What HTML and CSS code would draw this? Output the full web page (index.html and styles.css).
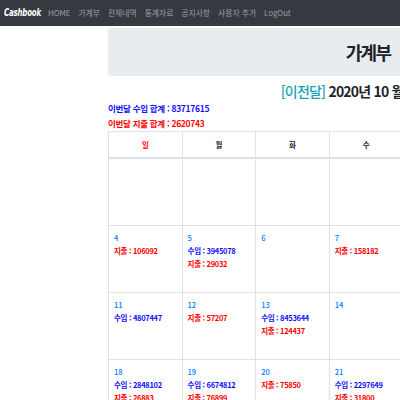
FILE: index.html
```html
<!DOCTYPE html>
<html lang="ko">
<head>
<meta charset="utf-8">
<title>Cashbook</title>
<link rel="stylesheet" href="styles.css">
</head>
<body>
<nav class="navbar">
  <span class="brand"><span class="brand-text">Cashbook</span></span>
  <ul class="nav">
    <li><a href="#">HOME</a></li>
    <li><a href="#">가계부</a></li>
    <li><a href="#">전체내역</a></li>
    <li><a href="#">통계자료</a></li>
    <li><a href="#">공지사항</a></li>
    <li><a href="#">사용자 추가</a></li>
    <li><a href="#">LogOut</a></li>
  </ul>
</nav>
<main class="container">
  <div class="jumbotron"><h1>가계부</h1></div>
  <h3 class="month"><a href="#" class="prev">[이전달]</a> 2020년 10 월 <a href="#" class="prev">[다음달]</a></h3>
  <div class="sum income">이번달 수입 합계 : 83717615</div>
  <div class="sum expense">이번달 지출 합계 : 2620743</div>
  <table class="cal">
    <thead>
      <tr><th class="sun">일</th><th>월</th><th>화</th><th>수</th><th>목</th><th>금</th><th>토</th></tr>
    </thead>
    <tbody>
      <tr><td></td><td></td><td></td><td></td><td><span class="d">1</span></td><td><span class="d">2</span></td><td><span class="d">3</span></td></tr>
      <tr>
        <td><span class="d">4</span><span class="out">지출 : 106092</span></td>
        <td><span class="d">5</span><span class="in">수입 : 3945078</span><span class="out">지출 : 29032</span></td>
        <td><span class="d">6</span></td>
        <td><span class="d">7</span><span class="out">지출 : 158182</span></td>
        <td><span class="d">8</span></td><td><span class="d">9</span></td><td><span class="d">10</span></td>
      </tr>
      <tr>
        <td><span class="d">11</span><span class="in">수입 : 4807447</span></td>
        <td><span class="d">12</span><span class="out">지출 : 57207</span></td>
        <td><span class="d">13</span><span class="in">수입 : 8453644</span><span class="out">지출 : 124437</span></td>
        <td><span class="d">14</span></td>
        <td><span class="d">15</span></td><td><span class="d">16</span></td><td><span class="d">17</span></td>
      </tr>
      <tr>
        <td><span class="d">18</span><span class="in">수입 : 2848102</span><span class="out">지출 : 26883</span></td>
        <td><span class="d">19</span><span class="in">수입 : 6674812</span><span class="out">지출 : 76899</span></td>
        <td><span class="d">20</span><span class="out">지출 : 75850</span></td>
        <td><span class="d">21</span><span class="in">수입 : 2297649</span><span class="out">지출 : 31800</span></td>
        <td><span class="d">22</span></td><td><span class="d">23</span></td><td><span class="d">24</span></td>
      </tr>
    </tbody>
  </table>
</main>
</body>
</html>
```
FILE: styles.css
```css
html, body {
  margin: 0;
  padding: 0;
  overflow: hidden;
  background: #fff;
  font-family: "Noto Sans CJK KR", "Noto Sans", sans-serif;
  color: #212529;
}
.navbar {
  height: 26px;
  background: #343a40;
  display: flex;
  align-items: center;
  padding: 0 0 0 4px;
  width: 400px;
  box-sizing: border-box;
}
.brand {
  width: 36px;
  color: #fff;
  font-weight: bold;
  font-style: italic;
  font-size: 11px;
  line-height: 14px;
  margin-top: -2px;
  white-space: nowrap;
}
.brand-text {
  display: inline-block;
  transform: scaleX(0.64);
  transform-origin: left center;
  font-family: "DejaVu Sans", sans-serif;
  letter-spacing: -0.3px;
}
.nav {
  display: flex;
  list-style: none;
  margin: 0;
  padding: 0 0 0 4px;
}
.nav a {
  display: block;
  padding: 0 4px;
  color: rgba(255,255,255,0.5);
  text-decoration: none;
  font-size: 7.8px;
  line-height: 12px;
  margin-top: -1px;
}
.container {
  margin-left: 108px;
  width: 516px;
}
.jumbotron {
  margin-top: 2px;
  height: 48px;
  background: #e9ecef;
  border-radius: 3px;
  display: flex;
  align-items: center;
  justify-content: center;
}
.jumbotron h1 {
  margin: 0 0 0 4px;
  font-size: 18px;
  letter-spacing: -1.8px;
  line-height: 20px;
  font-weight: bold;
  color: #212529;
}
.month {
  margin: 7px 0 0;
  text-align: center;
  font-size: 14px;
  line-height: 17px;
  font-weight: bold;
  letter-spacing: -0.8px;
  color: #212529;
}
.month .prev {
  color: #17a2b8;
  text-decoration: none;
  font-weight: 500;
}
.sum {
  font-size: 8.5px;
  font-weight: bold;
  letter-spacing: -0.3px;
  line-height: 15px;
}
.sum.income { margin-top: 1px; color: #1010ff; }
.sum.expense { color: #ff0000; }
.cal {
  margin-top: 0px;
  width: 516px;
  table-layout: fixed;
  border-collapse: collapse;
}
.cal th, .cal td {
  border: 1px solid #dee2e6;
  padding: 5px 5px;
  vertical-align: top;
  text-align: left;
  font-size: 7.5px;
  line-height: 13px;
}
.cal th {
  text-align: center;
  font-weight: bold;
  border-bottom: 2px solid #dee2e6;
  padding: 6px 5px;
  letter-spacing: -0.3px;
}
.cal th.sun { color: #ff0000; }
.cal tbody tr { height: 67px; }
.cal td span { display: block; }
.cal .d { color: #007bff; font-weight: 500; }
.cal .in { color: #1010ff; font-weight: bold; letter-spacing: -0.3px; }
.cal .out { color: #ff0000; font-weight: bold; letter-spacing: -0.3px; }
```
